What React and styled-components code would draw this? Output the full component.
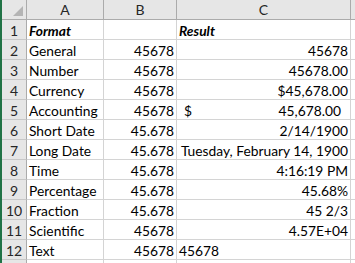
import React from "react";
import styled, { createGlobalStyle } from "styled-components";

const Global = createGlobalStyle`
  html, body { margin: 0; padding: 0; background: #fff; overflow: hidden; }
  body { font-family: Lato, "Liberation Sans", sans-serif; }
`;

const Frame = styled.div`
  display: flex;
  width: 355px;
  height: 263px;
  overflow: hidden;
  border-left: 2px solid #217346;
  box-sizing: border-box;
`;

const Grid = styled.div`
  display: grid;
  grid-template-columns: 25px 77px 73px 174px 40px;
  grid-auto-rows: 20px;
  flex: none;
`;

const Corner = styled.div`
  box-sizing: border-box;
  background: #e6e6e6;
  border-right: 1px solid #ababab;
  border-bottom: 1px solid #ababab;
  position: relative;
`;

const Triangle = styled.div`
  position: absolute;
  right: 3px;
  bottom: 3px;
  width: 0;
  height: 0;
  border-left: 10px solid transparent;
  border-bottom: 10px solid #b4b4b4;
`;

const ColHead = styled.div`
  box-sizing: border-box;
  background: #e6e6e6;
  border-right: 1px solid #ababab;
  border-bottom: 1px solid #ababab;
  color: #262626;
  font-size: 14px;
  line-height: 19px;
  text-align: center;
`;

const RowHead = styled.div`
  box-sizing: border-box;
  background: #e6e6e6;
  border-right: 1px solid #ababab;
  border-bottom: 1px solid #c8c8c8;
  color: #262626;
  font-size: 14px;
  line-height: 21px;
  text-align: center;
`;

const Cell = styled.div`
  box-sizing: border-box;
  background: #fff;
  border-right: 1px solid #d4d4d4;
  border-bottom: 1px solid #d4d4d4;
  color: #000;
  font-size: 13.8px;
  line-height: 21px;
  padding: 0 2px;
  white-space: nowrap;
  overflow: visible;
  text-align: ${(p) => (p.$right ? "right" : "left")};
  font-weight: ${(p) => (p.$bold ? 700 : 400)};
  font-style: ${(p) => (p.$bold ? "italic" : "normal")};
`;

const AcctCell = styled(Cell)`
  display: flex;
  justify-content: space-between;
  padding: 0 9px 0 7px;
`;

const rows = [
  ["Format", "", "Result", "head"],
  ["General", "45678", "45678"],
  ["Number", "45678", "45678.00"],
  ["Currency", "45678", "$45,678.00"],
  ["Accounting", "45678", "45,678.00", "acct"],
  ["Short Date", "45.678", "2/14/1900"],
  ["Long Date", "45.678", "Tuesday, February 14, 1900"],
  ["Time", "45.678", "4:16:19 PM"],
  ["Percentage", "45.678", "45.68%"],
  ["Fraction", "45.678", "45 2/3"],
  ["Scientific", "45678", "4.57E+04"],
  ["Text", "45678", "45678", "text"],
  ["", "", "", "blank"],
];

export default function App() {
  return (
    <>
      <Global />
      <Frame>
        <Grid>
          <Corner>
            <Triangle />
          </Corner>
          {["A", "B", "C", ""].map((c, i) => (
            <ColHead key={i}>{c}</ColHead>
          ))}
          {rows.map(([a, b, c, kind], i) => (
            <React.Fragment key={i}>
              <RowHead>{kind === "blank" ? "" : i + 1}</RowHead>
              <Cell $bold={kind === "head"}>{a}</Cell>
              <Cell $right>{b}</Cell>
              {kind === "acct" ? (
                <AcctCell>
                  <span>$</span>
                  <span>{c}</span>
                </AcctCell>
              ) : (
                <Cell $right={kind !== "head" && kind !== "text"} $bold={kind === "head"}>
                  {c}
                </Cell>
              )}
              <Cell />
            </React.Fragment>
          ))}
        </Grid>
      </Frame>
    </>
  );
}
